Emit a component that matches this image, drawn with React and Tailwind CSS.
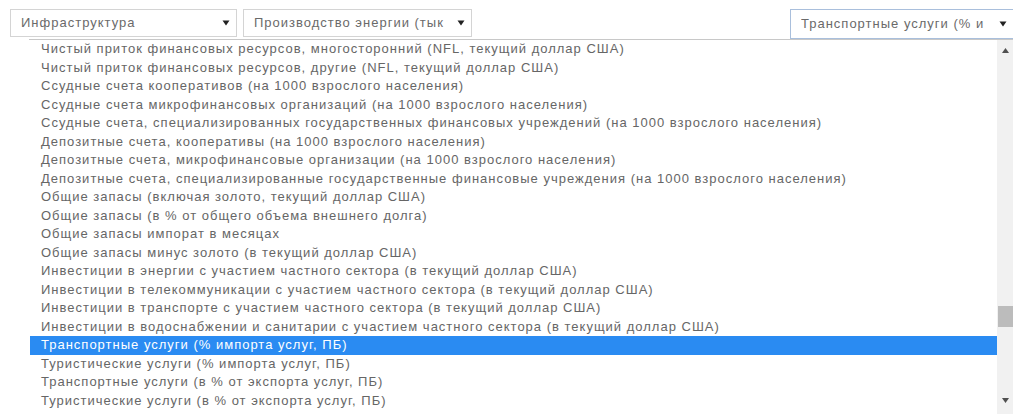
import React from "react";

const items = [
  "Чистый приток финансовых ресурсов, многосторонний (NFL, текущий доллар США)",
  "Чистый приток финансовых ресурсов, другие (NFL, текущий доллар США)",
  "Ссудные счета кооперативов (на 1000 взрослого населения)",
  "Ссудные счета микрофинансовых организаций (на 1000 взрослого населения)",
  "Ссудные счета, специализированных государственных финансовых учреждений (на 1000 взрослого населения)",
  "Депозитные счета, кооперативы (на 1000 взрослого населения)",
  "Депозитные счета, микрофинансовые организации (на 1000 взрослого населения)",
  "Депозитные счета, специализированные государственные финансовые учреждения (на 1000 взрослого населения)",
  "Общие запасы (включая золото, текущий доллар США)",
  "Общие запасы (в % от общего объема внешнего долга)",
  "Общие запасы импорат в месяцах",
  "Общие запасы минус золото (в текущий доллар США)",
  "Инвестиции в энергии с участием частного сектора (в текущий доллар США)",
  "Инвестиции в телекоммуникации с участием частного сектора (в текущий доллар США)",
  "Инвестиции в транспорте с участием частного сектора (в текущий доллар США)",
  "Инвестиции в водоснабжении и санитарии с участием частного сектора (в текущий доллар США)",
  "Транспортные услуги (% импорта услуг, ПБ)",
  "Туристические услуги (% импорта услуг, ПБ)",
  "Транспортные услуги (в % от экспорта услуг, ПБ)",
  "Туристические услуги (в % от экспорта услуг, ПБ)",
];

const SELECTED = 16;

function Caret() {
  return (
    <svg width="8" height="6" viewBox="0 0 8 6" className="shrink-0">
      <path d="M0.5 0.5 L7.5 0.5 L4 5.5 Z" fill="#222" />
    </svg>
  );
}

function SelectBox({ label, className }) {
  return (
    <div
      className={
        "flex items-center justify-between h-[28px] bg-white pl-[10px] pr-[6px] text-[13px] tracking-[1px] text-[#6a6a6a] overflow-hidden whitespace-nowrap " +
        className
      }
    >
      <span className="overflow-hidden">{label}</span>
      <Caret />
    </div>
  );
}

export default function App() {
  return (
    <div
      className="relative w-[1013px] h-[414px] bg-white overflow-hidden"
      style={{ fontFamily: '"Liberation Sans", Arial, sans-serif' }}
    >
      {/* filter row */}
      <div className="flex items-start pt-[9px] h-[39px]">
        <SelectBox
          label="Инфраструктура"
          className="ml-[10px] w-[227px] border border-[#d4d4d4]"
        />
        <SelectBox
          label="Производство энергии (тык"
          className="ml-[6px] w-[229px] border border-[#d4d4d4]"
        />
        <SelectBox
          label="Транспортные услуги (% и"
          className="ml-auto w-[223px] h-[30px] border border-[#a9bfdc] border-r-0"
        />
      </div>

      {/* open list */}
      <div className="ml-[29px] flex border-t border-[#c8c8c8] h-[375px]">
        <div className="flex-1 pl-[1px]">
          {items.map((text, i) => (
            <div
              key={i}
              className={
                "h-[18.5px] leading-[18.5px] pl-[11px] text-[13px] tracking-[1px] whitespace-nowrap " +
                (i === SELECTED ? "bg-[#2a8bf2] text-white" : "text-[#666]")
              }
            >
              {text}
            </div>
          ))}
        </div>
        {/* scrollbar */}
        <div className="w-[16px] bg-[#f1f1f1] flex flex-col items-center">
          <svg width="7" height="5" viewBox="0 0 7 5" className="mt-[8px]">
            <path d="M0 5 L7 5 L3.5 0 Z" fill="#505050" />
          </svg>
          <div className="mt-[253px] w-[15px] h-[21px] bg-[#bcbcbc]" />
          <svg width="7" height="5" viewBox="0 0 7 5" className="mt-[71px]">
            <path d="M0 0 L7 0 L3.5 5 Z" fill="#505050" />
          </svg>
        </div>
      </div>
    </div>
  );
}
